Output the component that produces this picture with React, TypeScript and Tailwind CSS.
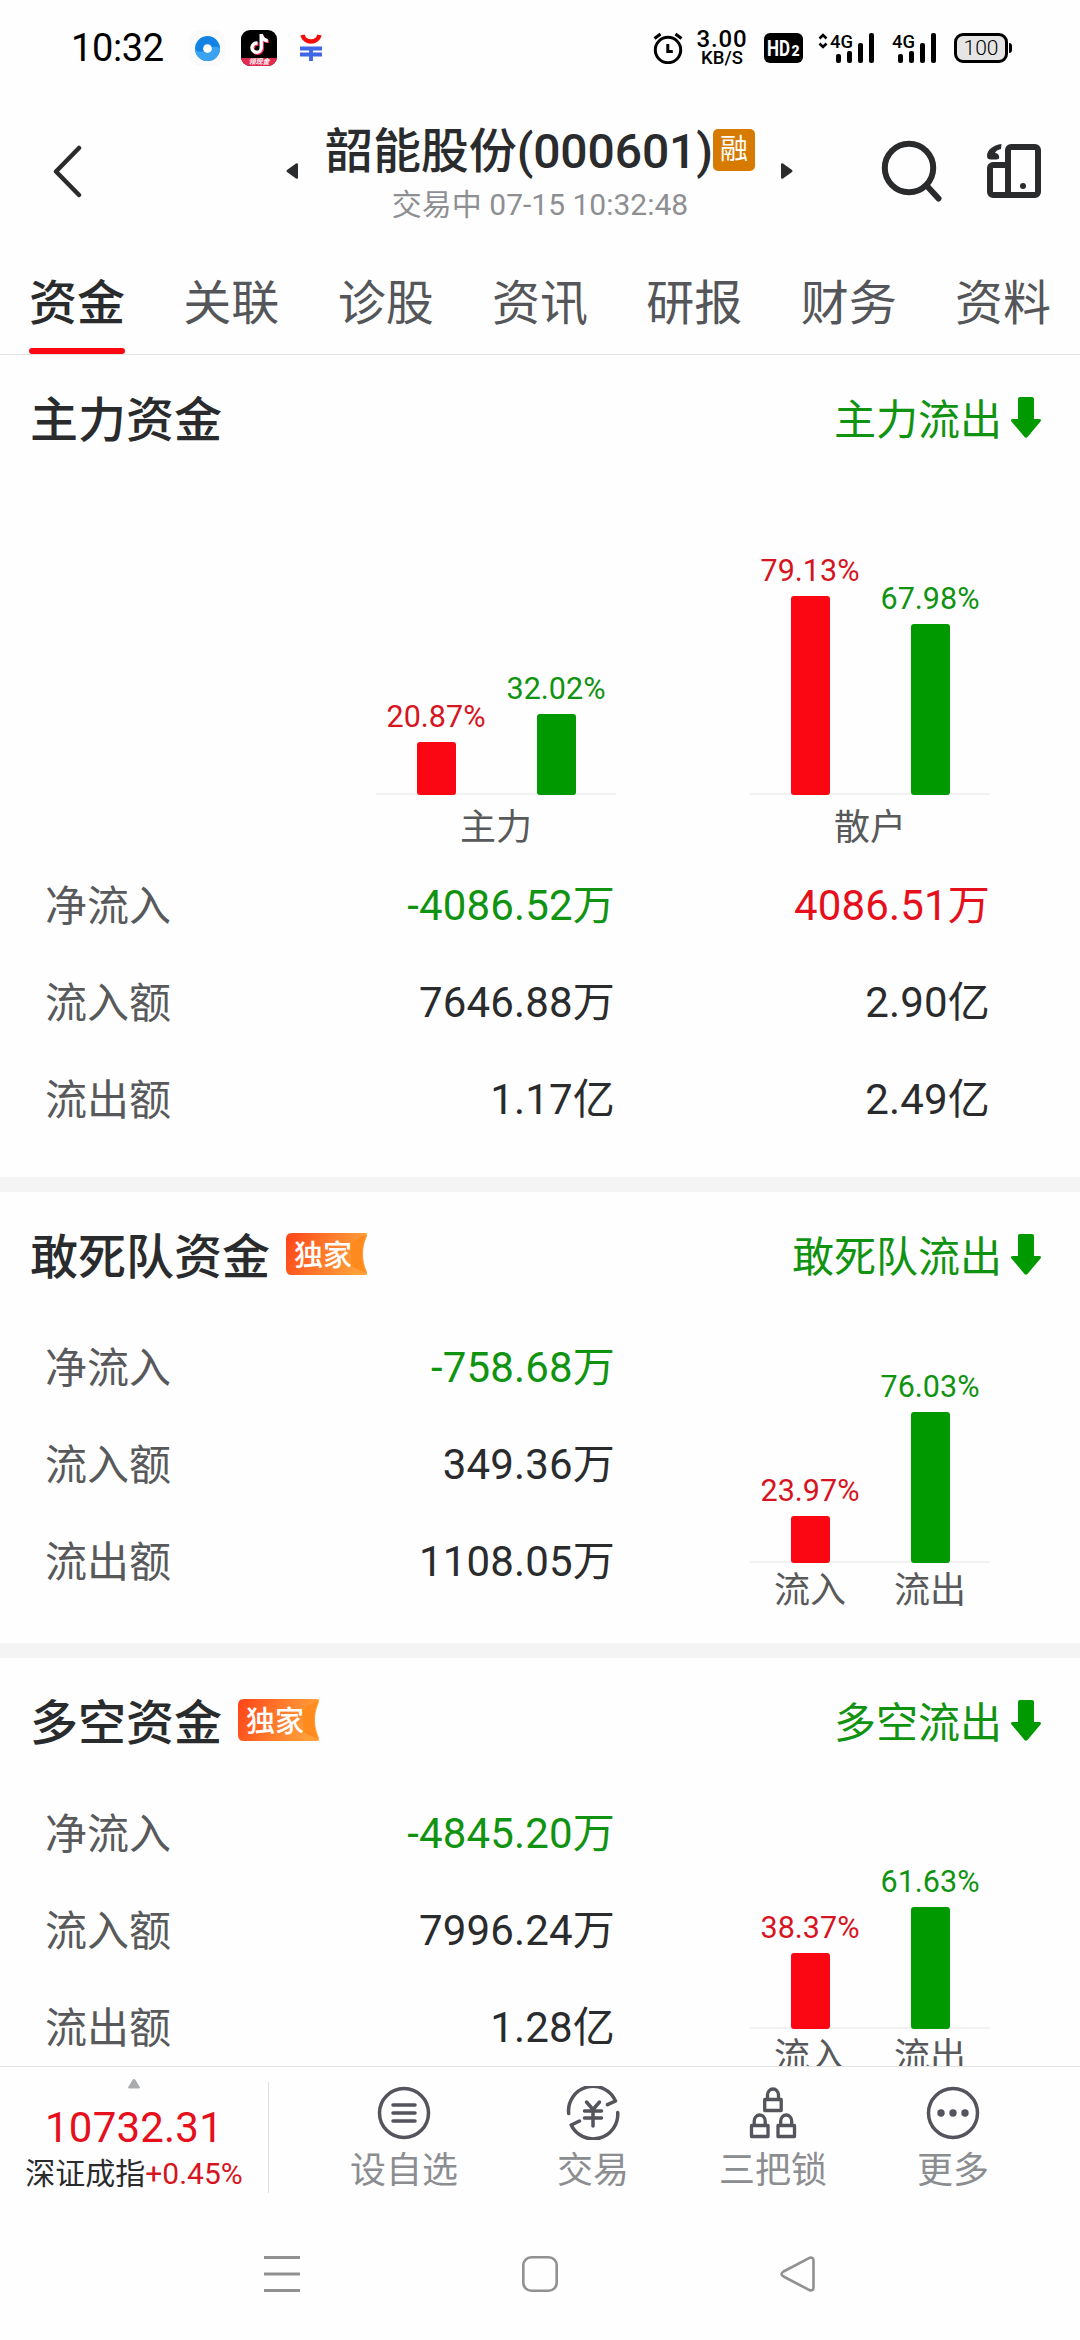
import React from 'react';
import { FaTiktok } from 'react-icons/fa';

type Tone = 'up' | 'down' | 'plain';

interface Bar {
  value: number;
  tone: 'up' | 'down';
}

interface FlowRow {
  label: string;
  values: { text: string; tone: Tone }[];
}

const textTone: Record<Tone, string> = {
  up: 'text-[#e60f1c]',
  down: 'text-[#109310]',
  plain: 'text-[#2a2b2d]',
};

const tabs = ['资金', '关联', '诊股', '资讯', '研报', '财务', '资料'];

const mainRows: FlowRow[] = [
  { label: '净流入', values: [{ text: '-4086.52万', tone: 'down' }, { text: '4086.51万', tone: 'up' }] },
  { label: '流入额', values: [{ text: '7646.88万', tone: 'plain' }, { text: '2.90亿', tone: 'plain' }] },
  { label: '流出额', values: [{ text: '1.17亿', tone: 'plain' }, { text: '2.49亿', tone: 'plain' }] },
];

const squadRows: FlowRow[] = [
  { label: '净流入', values: [{ text: '-758.68万', tone: 'down' }] },
  { label: '流入额', values: [{ text: '349.36万', tone: 'plain' }] },
  { label: '流出额', values: [{ text: '1108.05万', tone: 'plain' }] },
];

const longShortRows: FlowRow[] = [
  { label: '净流入', values: [{ text: '-4845.20万', tone: 'down' }] },
  { label: '流入额', values: [{ text: '7996.24万', tone: 'plain' }] },
  { label: '流出额', values: [{ text: '1.28亿', tone: 'plain' }] },
];

const Signal: React.FC<{ arrows?: boolean }> = ({ arrows = false }) => (
  <svg width="58" height="32" viewBox="0 0 58 32" className="block overflow-visible">
    {arrows && (
      <path d="M2.5 6.5 6 3l3.5 3.5M2.5 11.5 6 15l3.5-3.5" fill="none" stroke="#000" strokeWidth="2.6" />
    )}
    <text x="13" y="15.5" fontSize="19" fontWeight="500" textLength="23" lengthAdjust="spacingAndGlyphs">4G</text>
    <rect x="19" y="22" width="5" height="9" rx="2" />
    <rect x="30" y="19" width="5" height="12" rx="2" />
    <rect x="41" y="11" width="5" height="20" rx="2" />
    <rect x="52" y="1" width="5" height="30" rx="2" />
  </svg>
);

const StatusBar: React.FC = () => (
  <div className="flex h-24 items-center pr-[68px] pl-[71px] text-black">
    <span className="w-[94px] text-[38px] leading-none tracking-[-0.4px]">10:32</span>
    <div className="ml-[24px] flex size-9 items-center justify-center rounded-[10px] bg-[#fafafa]">
      <svg width="25" height="25" viewBox="0 0 24 24">
        <circle cx="12" cy="12" r="12" fill="#1282e4" />
        <path d="M0 12.500C3 16 7 15.500 11 13s10-4 13-1a12 12 0 0 1-24 .5Z" fill="#3aa2ef" />
        <circle cx="12" cy="12" r="4.2" fill="#fff" />
      </svg>
    </div>
    <div className="ml-4 flex size-9 flex-col overflow-hidden rounded-[9px] bg-black">
      <div className="flex h-[28px] items-center justify-center">
        <FaTiktok className="size-[20px] text-white drop-shadow-[1.5px_1px_0_#fe2c55]" />
      </div>
      <div className="flex h-2 items-center justify-center bg-[#e2294f] text-[7px] leading-none font-bold text-white italic">领现金</div>
    </div>
    <svg width="24" height="28" viewBox="0 0 24 28" className="ml-[22px]">
      <path d="M3.5 1c1 4 4.500 6.500 8.500 6.500S19.500 5 20.500 1" fill="none" stroke="#f40c0c" strokeWidth="4.500" />
      <path d="M1 14.500h22M1 20.500h22M12 14.500V27" fill="none" stroke="#3f66e6" strokeWidth="3.800" />
    </svg>

    <svg width="30" height="32" viewBox="0 0 30 32" className="ml-auto" fill="none" stroke="#000">
      <circle cx="15" cy="18" r="12.700" strokeWidth="3" />
      <path d="M1.500 6.500 7.500 2M28.500 6.500 22.500 2" strokeWidth="3.200" />
      <path d="M14.800 12v7.500h5" strokeWidth="3" />
    </svg>
    <div className="ml-[14px] flex w-[50px] flex-col items-center font-medium">
      <span className="text-2xl leading-[20px] tracking-[0.8px]">3.00</span>
      <span className="mt-px text-[18.5px] leading-[17px]">KB/S</span>
    </div>
    <svg width="39" height="30" viewBox="0 0 39 30" className="ml-[17px]">
      <rect width="39" height="30" rx="6" />
      <text x="3" y="23" fontSize="22" fontWeight="700" fill="#fff" textLength="23" lengthAdjust="spacingAndGlyphs">HD</text>
      <text x="27.500" y="23" fontSize="14" fontWeight="900" fill="#fff">2</text>
    </svg>
    <div className="ml-[14px]"><Signal arrows /></div>
    <div className="ml-1"><Signal /></div>
    <div className="ml-[17px] flex items-center gap-px">
      <div className="flex h-[30px] w-[54px] items-center justify-center rounded-[9px] border-3 border-black bg-[#e5e5e5] text-[21px] leading-none font-light">100</div>
      <div className="h-2.5 w-[3px] rounded-r-sm bg-black" />
    </div>
  </div>
);

const Header: React.FC = () => (
  <header className="flex h-[150px] items-center text-[#2a2b2d]">
    <svg width="30" height="54" viewBox="0 0 30 54" className="ml-[52px]" fill="none" stroke="currentColor" strokeWidth="4.500" strokeLinecap="round" strokeLinejoin="round">
      <path d="M27 4 4 27.500 27 51" />
    </svg>
    <svg width="12" height="16" viewBox="0 0 12 16" className="ml-[204px]">
      <path d="M12 1.500v13q0 2-2 1L1 9Q0 8 1 7l9-6.500q2-1 2 1Z" fill="currentColor" />
    </svg>
    <div className="mt-1 ml-[27px] flex w-[430px] flex-col items-center gap-[7px]">
      <div className="flex h-14 items-center">
        <span className="text-[48px] leading-[56px] font-medium tracking-[-0.1px] whitespace-nowrap">韶能股份(000601)</span>
        <span className="mb-[3px] flex size-[42px] items-center justify-center rounded-[5px] bg-[#d67a00] text-[28px] leading-none text-white">融</span>
      </div>
      <div className="text-[30px] leading-9 whitespace-nowrap text-[#8e8f93]">交易中 07-15 10:32:48</div>
    </div>
    <svg width="12" height="16" viewBox="0 0 12 16" className="ml-[26px]">
      <path d="M0 1.500v13q0 2 2 1L11 9q1-1 0-2L2 .5Q0-.5 0 1.500Z" fill="currentColor" />
    </svg>
    <svg width="62" height="62" viewBox="0 0 62 62" className="ml-[88px]" fill="none" stroke="currentColor" strokeWidth="6">
      <circle cx="28" cy="28" r="24.200" />
      <path d="m46 46 11.500 12.500" strokeLinecap="round" />
    </svg>
    <svg width="54" height="54" viewBox="0 0 54 54" className="ml-[44px]" fill="none" stroke="currentColor" strokeWidth="6">
      <rect x="21" y="3" width="30" height="48" rx="3" />
      <path d="M21 21H6a3 3 0 0 0-3 3v24a3 3 0 0 0 3 3h18" />
      <path d="M14.500 0C6 1 0 6 0 12q0 3.500 4 3.500h5q4 0 3-3.500-1-3-4-3 1-3 6-4Z" fill="currentColor" stroke="none" />
      <circle cx="36" cy="42" r="3" fill="currentColor" stroke="none" />
    </svg>
  </header>
);

const TabBar: React.FC = () => (
  <nav className="flex h-[109px] justify-between border-b border-[#e2e2e2] px-[29px] pt-[30px] text-[48px] leading-[56px] text-[#555659]">
    {tabs.map((tab, index) => (
      <div key={tab} className="flex w-24 flex-col gap-4">
        <span className={index === 0 ? 'font-medium text-[#2a2b2d]' : ''}>{tab}</span>
        {index === 0 && <span className="h-1.5 rounded-full bg-[#fb0713]" />}
      </div>
    ))}
  </nav>
);

const ExclusiveBadge: React.FC<{ id: string }> = ({ id }) => (
  <span className="relative mb-2 ml-[16px] block h-[42px] w-[81px]">
    <svg width="81" height="42" viewBox="0 0 81 42" className="block">
      <defs>
        <linearGradient id={id} x1="0" y1="0" x2="1" y2="0.200">
          <stop offset="0" stopColor="#ff4318" />
          <stop offset="0.550" stopColor="#ff7a2c" />
          <stop offset="1" stopColor="#ff9f3a" />
        </linearGradient>
      </defs>
      <path d="M6 0h73q3 0 2 3-4 9-4 18t4 18q1 3-2 3H6q-6 0-6-6V6q0-6 6-6Z" fill={`url(#${id})`} />
      <path d="m65 9 15-7q-4 9-4 19t4 19l-15-7Z" fill="#ff8a1e" />
    </svg>
    <span className="absolute top-px left-[8px] text-[29px] leading-[45px] font-medium text-white">独家</span>
  </span>
);

const SectionHeader: React.FC<{ title: string; trend: string; badge?: string }> = ({ title, trend, badge }) => (
  <div className="flex h-[127px] items-center pt-[5px] pr-[39px] pl-[30px]">
    <h2 className="text-[48px] leading-[56px] font-medium text-[#2a2b2d]">{title}</h2>
    {badge && <ExclusiveBadge id={badge} />}
    <span className="ml-auto text-[42px] leading-[56px] text-[#109310]">{trend}</span>
    <svg width="30" height="41" viewBox="0 0 30 41" className="mb-[7px] ml-[9px]">
      <path d="M9 0h12q2 0 2 2v20h5q3 0 1.500 2.500L16.500 40q-1.500 1.500-3 0L.5 24.500Q-1 22 2 22h5V2q0-2 2-2Z" fill="#009a00" />
    </svg>
  </div>
);

const FlowTable: React.FC<{ rows: FlowRow[] }> = ({ rows }) => (
  <div className="flex flex-col pl-[45px] text-[42px]">
    {rows.map((row) => (
      <div key={row.label} className="flex h-[97px] items-center leading-[56px]">
        <span className="mt-0.5 w-[200px] text-[#58595b]">{row.label}</span>
        {row.values.map((value, index) => (
          <span
            key={index}
            className={`text-right tracking-[0.15px] ${index === 0 ? 'w-[370px]' : 'w-[375px]'} ${textTone[value.tone]}`}
          >
            {value.text}
          </span>
        ))}
      </div>
    ))}
  </div>
);

const BarPair: React.FC<{ bars: Bar[]; scale: number }> = ({ bars, scale }) => (
  <div className="relative grid h-full w-[240px] grid-cols-2 items-end">
    <div className="absolute bottom-0 left-0 h-0.5 w-full bg-[#f2f2f3]" />
    {bars.map((bar) => (
      <div key={bar.tone} className="relative flex flex-col items-center">
        <span className={`mb-[7px] text-[30.5px] leading-9 ${bar.tone === 'up' ? 'text-[#d71522]' : 'text-[#109310]'}`}>
          {bar.value.toFixed(2)}%
        </span>
        <div
          className={`w-[39px] rounded-[3px] ${bar.tone === 'up' ? 'bg-[#fb0713]' : 'bg-[#009a00]'}`}
          style={{ height: bar.value * scale }}
        />
      </div>
    ))}
  </div>
);

const MainSection: React.FC = () => (
  <section className="pb-[29px]">
    <SectionHeader title="主力资金" trend="主力流出" />
    <div className="flex h-[313px] gap-[134px] pl-[376px]">
      <BarPair scale={2.52} bars={[{ value: 20.87, tone: 'up' }, { value: 32.02, tone: 'down' }]} />
      <BarPair scale={2.52} bars={[{ value: 79.13, tone: 'up' }, { value: 67.98, tone: 'down' }]} />
    </div>
    <div className="flex h-[62px] gap-[134px] pt-[5px] pl-[376px] text-center text-[36px] leading-[56px] text-[#58595b]">
      <span className="w-[240px]">主力</span>
      <span className="w-[240px]">散户</span>
    </div>
    <FlowTable rows={mainRows} />
  </section>
);

interface SideSectionProps {
  title: string;
  trend: string;
  badge: string;
  rows: FlowRow[];
  inflow: number;
  outflow: number;
}

const SideSection: React.FC<SideSectionProps> = ({ title, trend, badge, rows, inflow, outflow }) => (
  <section className="border-t-[15px] border-[#f4f4f4] pb-[33px]">
    <SectionHeader title={title} trend={trend} badge={badge} />
    <div className="flex gap-[135px]">
      <FlowTable rows={rows} />
      <div className="flex flex-col">
        <div className="h-[244px]">
          <BarPair scale={1.98} bars={[{ value: inflow, tone: 'up' }, { value: outflow, tone: 'down' }]} />
        </div>
        <div className="grid h-[47px] grid-cols-2 pt-[8px] text-center text-[36px] leading-[40px] text-[#58595b]">
          <span>流入</span>
          <span>流出</span>
        </div>
      </div>
    </div>
  </section>
);

const iconProps = {
  width: 54,
  height: 54,
  viewBox: '0 0 54 54',
  fill: 'none',
  stroke: '#53545c',
  strokeWidth: 3.5,
  strokeLinecap: 'round' as const,
  strokeLinejoin: 'round' as const,
};

const WatchIcon: React.FC = () => (
  <svg {...iconProps}>
    <circle cx="27" cy="27" r="24.500" />
    <path d="M16 19h22M16 27h22M16 35h22" />
  </svg>
);

const TradeIcon: React.FC = () => (
  <svg {...iconProps}>
    <path d="M2.700 27.500A24.500 24.500 0 0 1 49.500 15L41.500 18.700" />
    <path d="M51.700 26.500A24.500 24.500 0 0 1 5.200 39L13.500 35" />
    <path d="m20.500 16 6.500 7.500 6.500-7.500M27 23.500V40M18.500 25h17M18.500 32h17" />
  </svg>
);

const LocksIcon: React.FC = () => (
  <svg {...iconProps} strokeWidth={3.3}>
    <path d="M18.700 13.500h16.500v11H18.700zM21.500 13.500V9a5.500 6 0 0 1 11 0v4.500" />
    <path d="M5.500 39.500H22v11H5.500zM8.200 39.500V35a5.500 6 0 0 1 11 0v4.500" />
    <path d="M32 39.500h16.500v11H32zM34.700 39.500V35a5.500 6 0 0 1 11 0v4.500" />
  </svg>
);

const MoreIcon: React.FC = () => (
  <svg {...iconProps}>
    <circle cx="27" cy="27" r="24.500" />
    <g fill="#53545c" stroke="none">
      <circle cx="15" cy="27" r="3.700" />
      <circle cx="27" cy="27" r="3.700" />
      <circle cx="39" cy="27" r="3.700" />
    </g>
  </svg>
);

const ActionItem: React.FC<{ label: string; children: React.ReactNode }> = ({ label, children }) => (
  <div className="flex flex-col items-center gap-[10px] pt-[19px] text-[36px] leading-[42px] text-[#8c8d91]">
    {children}
    <span>{label}</span>
  </div>
);

const BottomBar: React.FC = () => (
  <div className="flex h-[150px] border-t border-[#e2e2e2]">
    <div className="flex w-[268px] flex-col items-center pt-3">
      <svg width="12" height="10" viewBox="0 0 12 10" className="block">
        <path d="M6 0q1 0 1.500 1L12 8.500q0 1-1.500 1h-9Q0 9.500 0 8.500L4.500 1Q5 0 6 0Z" fill="#aaabad" />
      </svg>
      <span className="mt-[15px] text-[42px] leading-[48px] tracking-[0.2px] text-[#e60f1c]">10732.31</span>
      <span className="mt-[4px] text-[30px] leading-9 whitespace-nowrap text-[#2a2b2d]">
        深证成指<span className="text-[#d71522]">+0.45%</span>
      </span>
    </div>
    <div className="mt-[15px] h-[111px] w-px bg-[#e0e0e0]" />
    <div className="ml-[81px] flex gap-[90px]">
      <div className="mr-[9px]">
        <ActionItem label="设自选"><WatchIcon /></ActionItem>
      </div>
      <ActionItem label="交易"><TradeIcon /></ActionItem>
      <ActionItem label="三把锁"><LocksIcon /></ActionItem>
      <ActionItem label="更多"><MoreIcon /></ActionItem>
    </div>
  </div>
);

const SystemNav: React.FC = () => (
  <div className="flex h-[124px] items-start justify-center gap-[222px] pt-10 text-[#919191]">
    <svg width="36" height="36" viewBox="0 0 36 36" stroke="currentColor" strokeWidth="3">
      <path d="M0 1.500h36M0 18h36M0 34.500h36" />
    </svg>
    <svg width="36" height="36" viewBox="0 0 36 36" fill="none" stroke="currentColor" strokeWidth="2.600">
      <rect x="1.300" y="1.300" width="33.400" height="33.400" rx="8" />
    </svg>
    <svg width="36" height="36" viewBox="0 0 36 36" fill="none" stroke="currentColor" strokeWidth="2.600" strokeLinejoin="round">
      <path d="M29.500 1.800 3.500 15.500q-4 2.500 0 5L29.500 34.200q4 1 4-3V4.800q0-4-4-3Z" />
    </svg>
  </div>
);

export default function App() {
  return (
    <div className="h-[2340px] w-[1080px] overflow-hidden bg-[#fefefe] font-['Roboto','Noto_Sans_CJK_SC',sans-serif]">
      <StatusBar />
      <Header />
      <TabBar />
      <main className="h-[1711px] overflow-hidden">
        <MainSection />
        <SideSection title="敢死队资金" trend="敢死队流出" badge="badge-squad" rows={squadRows} inflow={23.97} outflow={76.03} />
        <SideSection title="多空资金" trend="多空流出" badge="badge-longshort" rows={longShortRows} inflow={38.37} outflow={61.63} />
      </main>
      <BottomBar />
      <SystemNav />
    </div>
  );
}
